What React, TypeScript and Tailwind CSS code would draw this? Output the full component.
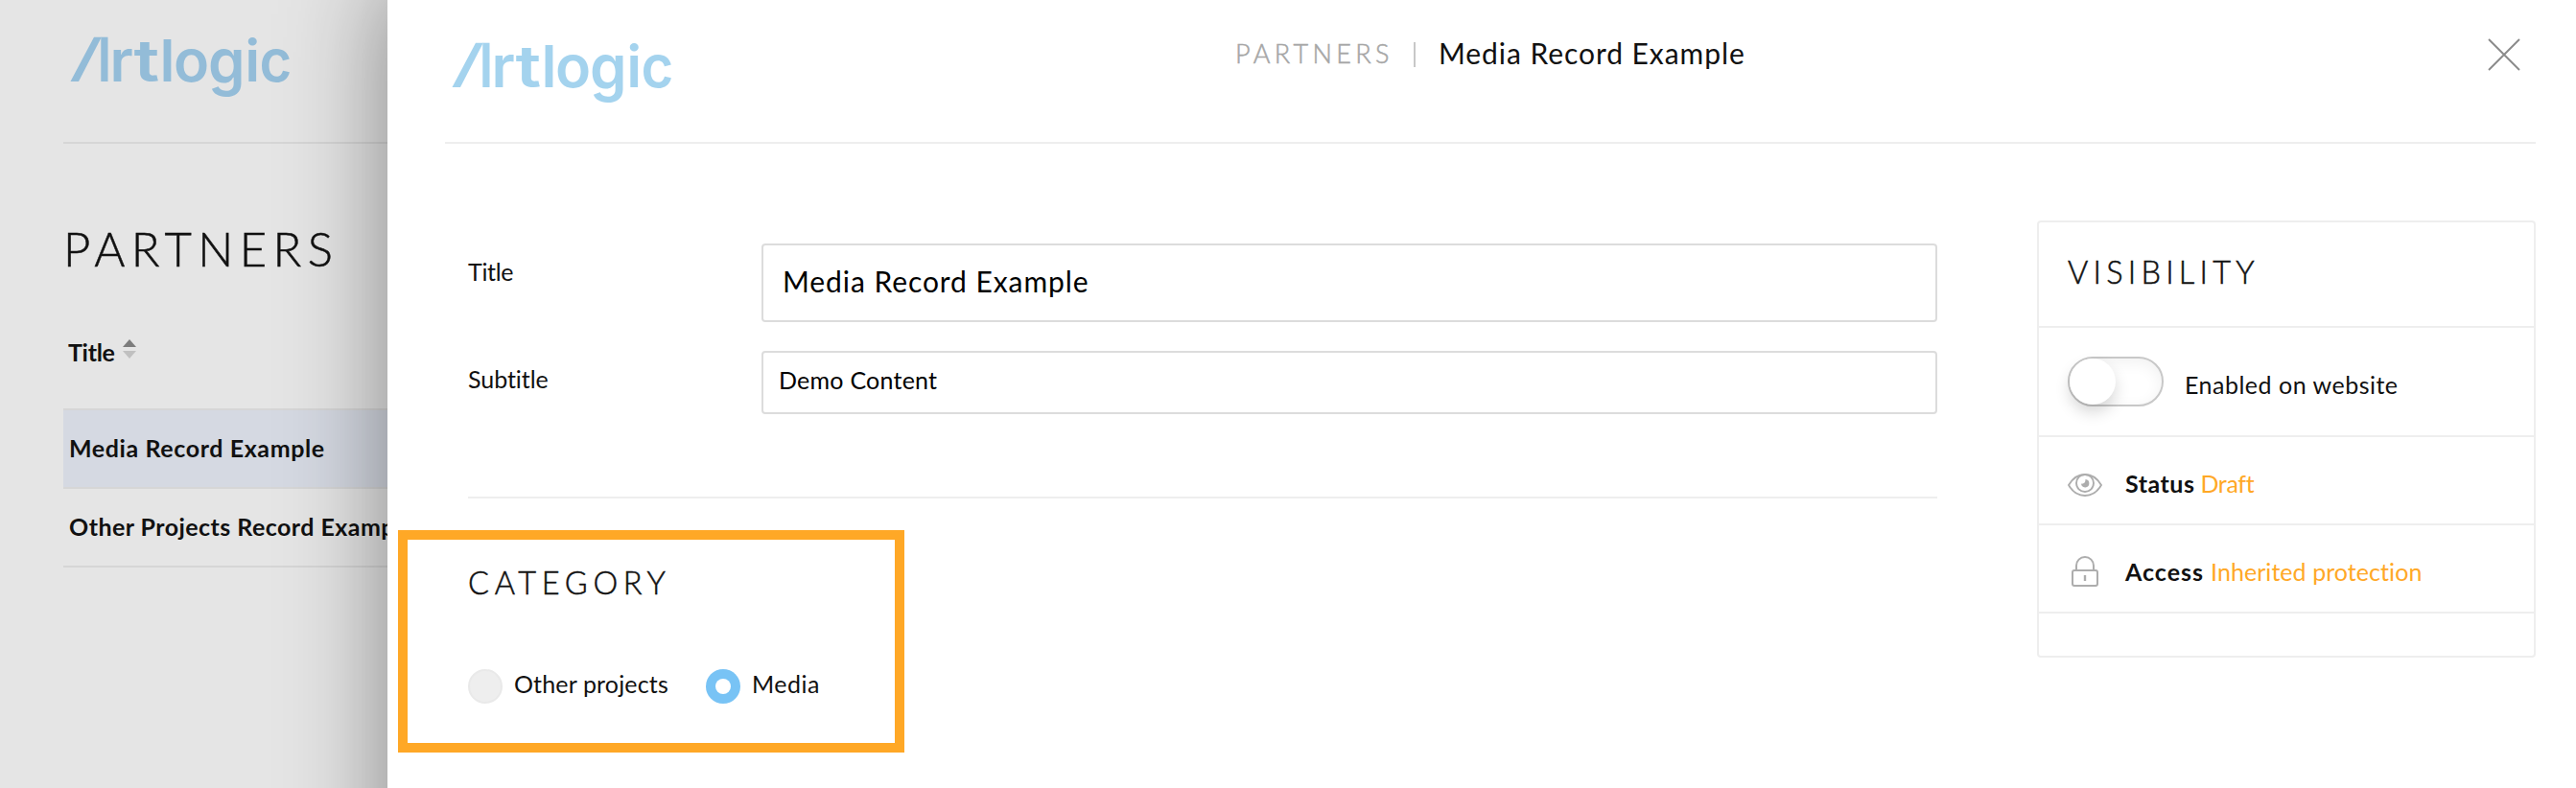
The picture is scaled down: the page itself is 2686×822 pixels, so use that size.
import React from 'react';

const wordmark = [
  { char: 'r', x: 48.6, y: 85, size: 61, stretch: 1 },
  { char: 't', x: 73.4, y: 85, size: 61, stretch: 1.24 },
  { char: 'l', x: 100.4, y: 85, size: 61, stretch: 1 },
  { char: 'o', x: 115, y: 85, size: 61, stretch: 1 },
  { char: 'g', x: 151, y: 87, size: 65, stretch: 0.95 },
  { char: 'i', x: 189.2, y: 85, size: 61, stretch: 1 },
  { char: 'c', x: 204.6, y: 85, size: 61, stretch: 0.95 },
];

function Logo({ className }: { className: string }) {
  return (
    <svg className={className} width="240" height="110" viewBox="0 0 240 110" fill="currentColor" role="img" aria-label="Artlogic">
      <polygon points="7.5,85 32,38.7 39.8,38.7 16,85" />
      <polygon points="39.3,38.7 46.5,38.7 46.5,85 39.3,85" />
      {wordmark.map(({ char, x, y, size, stretch }) => (
        <text
          key={char}
          transform={`translate(${x} ${y}) scale(${stretch} 1)`}
          fontFamily="Inter, sans-serif"
          fontWeight="600"
          fontSize={size}
        >
          {char}
        </text>
      ))}
    </svg>
  );
}

function SortArrows() {
  return (
    <svg className="mt-[5px] ml-[8px] shrink-0" width="14" height="20" viewBox="0 0 14 20">
      <path d="M0 8L7 0l7 8z" fill="#7c7c7c" />
      <path d="M0 12l7 8 7-8z" fill="#c0c0c0" />
    </svg>
  );
}

function EyeIcon() {
  return (
    <svg width="36" height="24" viewBox="0 0 36 24" fill="none" stroke="#adadad" strokeWidth="1.9">
      <path d="M1 12C5 5 11 1 18 1s13 4 17 11c-4 7-10 11-17 11S5 19 1 12z" strokeLinejoin="round" />
      <circle cx="18" cy="10" r="9" />
      <path d="M18.5 6a4.2 4.2 0 1 1-4.5 4.6c3 .4 4.600-1.400 4.500-4.600z" fill="#adadad" stroke="none" />
    </svg>
  );
}

function LockIcon() {
  return (
    <svg width="28" height="32" viewBox="0 0 28 32" fill="none" stroke="#adadad" strokeWidth="2">
      <rect x="1" y="15" width="26" height="16" rx="2" />
      <path d="M5 15V10a9 9 0 0 1 18 0v5" />
      <path d="M14 20v6" strokeWidth="2.4" />
    </svg>
  );
}

function Sidebar() {
  return (
    <aside className="flex h-[822px] w-[404px] shrink-0 flex-col overflow-hidden bg-[#e5e5e5] pl-[66px] whitespace-nowrap text-[#111]">
      <div className="h-[150px] shrink-0 border-b-2 border-[#d6d6d6]">
        <Logo className="text-[#93bcd8]" />
      </div>
      <h1 className="mt-[79px] text-[49px] leading-[60px] font-light tracking-[6.4px] [-webkit-text-stroke:0.5px_#111]">PARTNERS</h1>
      <div className="mt-[60px] flex h-[36px] pl-[5px] text-[25px] leading-[36px] font-bold">
        <span className="w-[49px] tracking-[-0.3px]">Title</span>
        <SortArrows />
      </div>
      <div className="mt-[41px] flex h-[84px] shrink-0 items-center border-y-2 border-[#d6d6d6] bg-[#d5d9e2] pb-[1px] pl-[6px] text-[25px] font-bold tracking-[0.6px]">
        Media Record Example
      </div>
      <div className="flex h-[82px] shrink-0 items-center border-b-2 border-[#d6d6d6] pb-[1px] pl-[6px] text-[25px] font-bold tracking-[0.45px]">
        Other Projects Record Example
      </div>
    </aside>
  );
}

function Header() {
  return (
    <header className="mr-[42px] ml-[60px] flex h-[150px] border-b-2 border-[#eee]">
      <Logo className="mt-[6px] shrink-0 text-[#a4d3ee]" />
      <div className="mt-[38px] ml-[584px] flex h-[36px] items-start whitespace-nowrap">
        <span className="w-[186px] text-[27px] leading-[36px] font-light tracking-[4.35px] text-[#a6a6a6] [-webkit-text-stroke:0.5px_#a6a6a6]">PARTNERS</span>
        <span className="mt-[6px] h-[26px] w-[2px] bg-[#c8c8c8]" />
        <span className="ml-[24px] text-[30px] leading-[34px] tracking-[0.94px] text-[#111]">Media Record Example</span>
      </div>
      <svg className="mt-[40px] mr-[16px] ml-auto" width="34" height="34" viewBox="0 0 34 34" stroke="#8a8a8a" strokeWidth="1.9">
        <path d="M1 1l32 32M33 1L1 33" />
      </svg>
    </header>
  );
}

function VisibilityCard() {
  return (
    <section className="mt-[80px] ml-[104px] flex h-[456px] w-[520px] flex-col rounded-[4px] border-2 border-[#eee] whitespace-nowrap text-[#111]">
      <div className="flex h-[110px] items-center border-b-2 border-[#eee] pb-[4px] pl-[30px] text-[32.5px] font-light tracking-[5.2px] [-webkit-text-stroke:0.5px_#111]">
        VISIBILITY
      </div>
      <div className="flex h-[114px] items-center border-b-2 border-[#eee] pl-[30px]">
        <div className="flex h-[52px] w-[100px] items-center rounded-full border-2 border-[#c8c8c8] shadow-[inset_0_4px_16px_rgba(0,0,0,0.06)]">
          <div className="h-[48px] w-[48px] rounded-full bg-white shadow-[0_8px_16px_rgba(0,0,0,0.16)]" />
        </div>
        <span className="ml-[22px] pt-[7px] text-[25px] tracking-[0.5px]">Enabled on website</span>
      </div>
      <div className="flex h-[92px] items-center border-b-2 border-[#eee] pl-[30px] text-[25px]">
        <span className="w-[60px] pt-[10px]"><EyeIcon /></span>
        <span className="pt-[8px] font-bold tracking-[0.5px]">Status</span>
        <span className="ml-[6px] pt-[8px] tracking-[-0.3px] text-[#ffa826]">Draft</span>
      </div>
      <div className="flex h-[92px] items-center border-b-2 border-[#eee] pl-[30px] text-[25px]">
        <span className="w-[60px] pt-[6px] pl-[4px]"><LockIcon /></span>
        <span className="pt-[8px] font-bold tracking-[1px]">Access</span>
        <span className="ml-[7px] pt-[8px] tracking-[0.06px] text-[#ffa826]">Inherited protection</span>
      </div>
    </section>
  );
}

function RecordForm() {
  return (
    <section className="ml-[84px] w-[1532px] pt-[104px] whitespace-nowrap text-[#111]">
      <div className="flex">
        <label className="mt-[11px] w-[306px] text-[25px] leading-[36px] tracking-[-0.3px]">Title</label>
        <div className="flex h-[82px] flex-1 items-center rounded-[4px] border-2 border-[#dcdcdc] pb-[4px] pl-[20px] text-[30px] tracking-[0.93px] text-black">
          Media Record Example
        </div>
      </div>
      <div className="mt-[30px] flex">
        <label className="mt-[11px] w-[306px] text-[25px] leading-[36px] tracking-[-0.05px]">Subtitle</label>
        <div className="flex h-[66px] flex-1 items-center rounded-[4px] border-2 border-[#dcdcdc] pb-[4px] pl-[16px] text-[25px] tracking-[0.24px] text-black">
          Demo Content
        </div>
      </div>
      <div className="mt-[86px] h-[2px] bg-[#eee]" />
      <h2 className="mt-[68px] text-[32.5px] leading-[40px] font-light tracking-[5.67px] [-webkit-text-stroke:0.5px_#111]">CATEGORY</h2>
      <div className="mt-[70px] flex text-[25px]">
        <div className="flex h-[36px] w-[248px] items-center">
          <span className="h-[36px] w-[36px] rounded-full border-2 border-[#e9e9e9] bg-[#eee]" />
          <span className="ml-[12px] pb-[5px] tracking-[0.15px]">Other projects</span>
        </div>
        <div className="flex h-[36px] items-center">
          <span className="flex h-[36px] w-[36px] items-center justify-center rounded-full bg-[#78c3f5]">
            <span className="h-[16px] w-[16px] rounded-full bg-white" />
          </span>
          <span className="ml-[12px] pb-[5px] tracking-[0.5px]">Media</span>
        </div>
      </div>
    </section>
  );
}

export default function App() {
  return (
    <div className="flex h-[822px] w-full overflow-hidden bg-[#e5e5e5] font-[Lato,sans-serif]">
      <Sidebar />
      <main className="relative h-[960px] flex-1 bg-white shadow-[0_-20px_100px_rgba(0,0,0,0.42)]">
        <Header />
        <div className="flex items-start">
          <RecordForm />
          <VisibilityCard />
        </div>
        <div className="pointer-events-none absolute top-[553px] left-[11px] h-[232px] w-[528px] border-[10px] border-[#ffa826]" />
      </main>
    </div>
  );
}
